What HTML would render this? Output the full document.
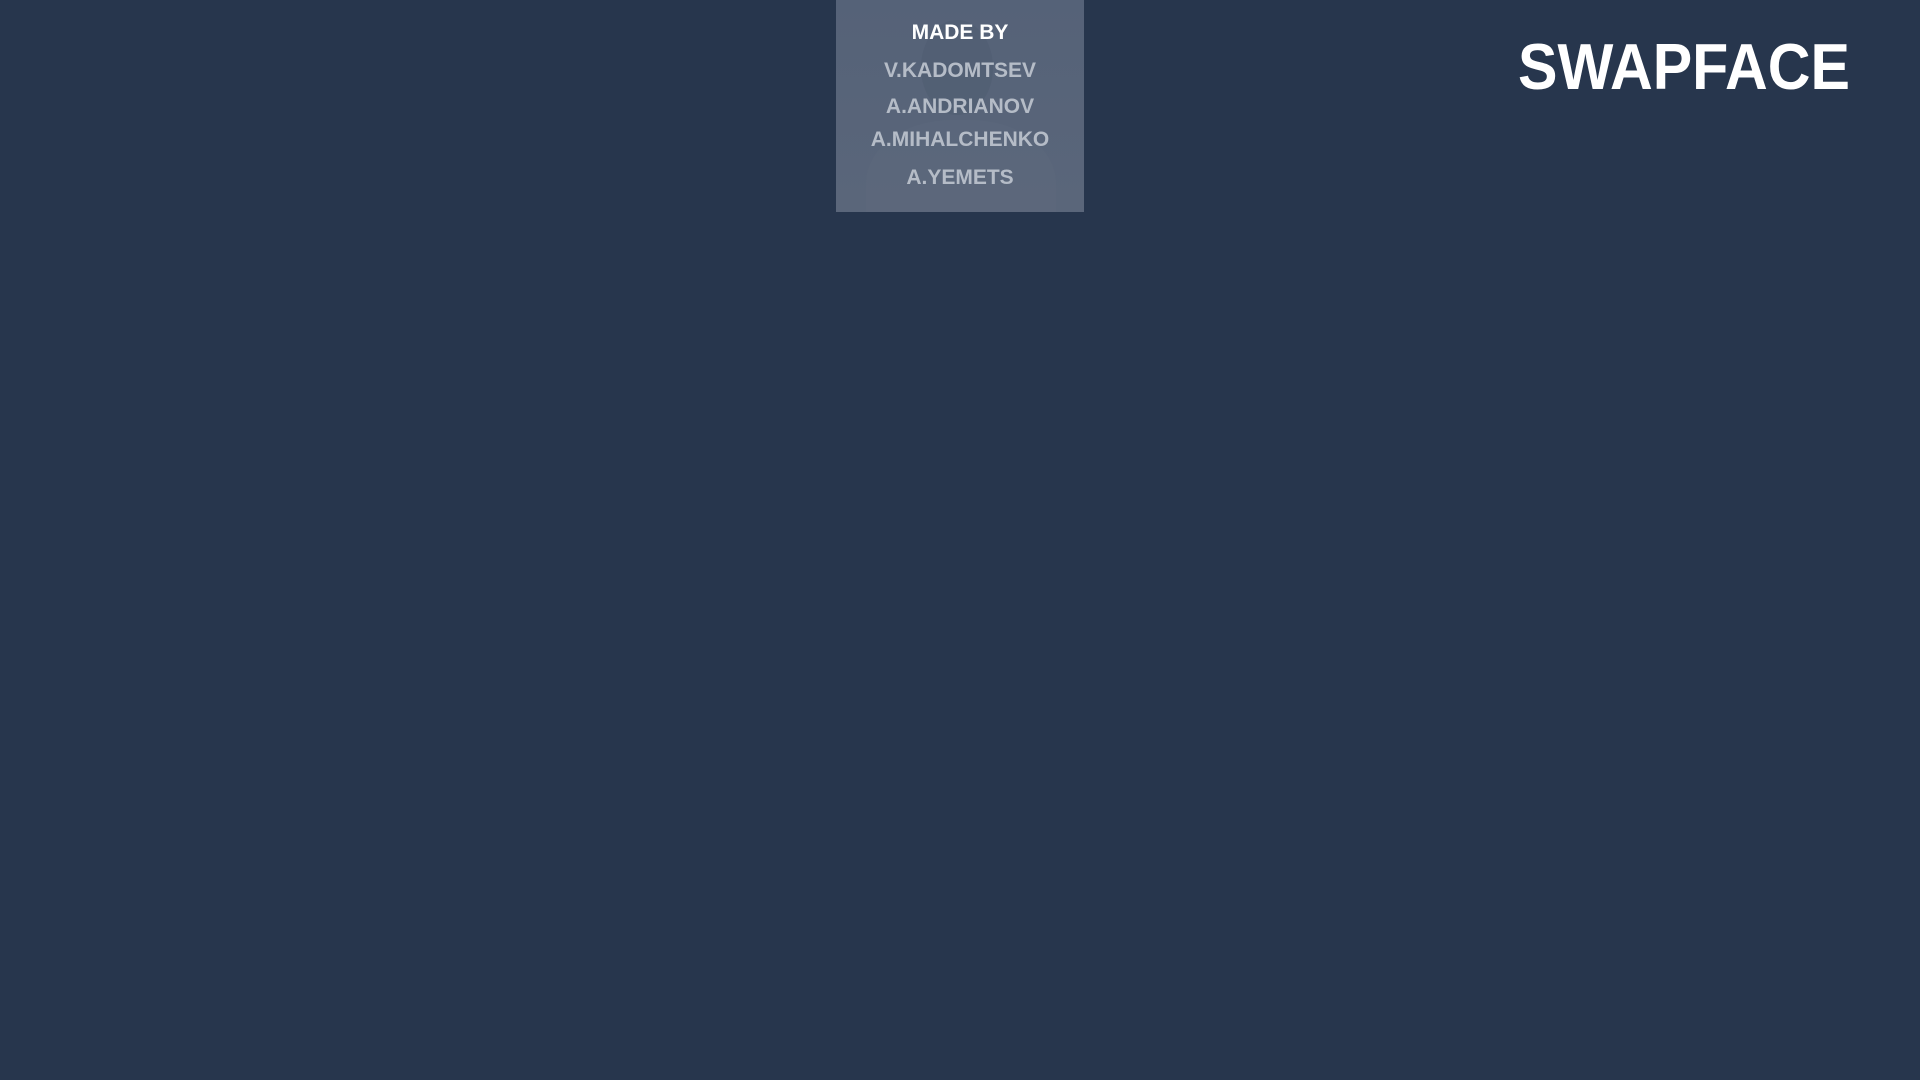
<!DOCTYPE html>
<html><head><meta charset="utf-8"><style>
html,body{margin:0;padding:0;width:1920px;height:1080px;background:#27364d;overflow:hidden;font-family:"Liberation Sans",sans-serif;font-weight:bold}
.box{position:absolute;left:836px;top:0;width:248px;height:212px;background:linear-gradient(#556278,#5a667a);overflow:hidden}
.t{position:absolute;left:836px;width:248px;text-align:center;line-height:1;font-size:21px;color:#b5bcc7;white-space:nowrap}
.h{color:#fff}
.logo{position:absolute;left:1518px;top:34px;font-size:65px;line-height:1;color:#fff;white-space:nowrap;transform-origin:0 0;transform:scaleX(0.91)}
</style></head><body>
<div class="box">
  <div style="position:absolute;left:85px;top:20px;width:72px;height:95px;border-radius:50%;background:#4e5b70;opacity:.5"></div>
  <div style="position:absolute;left:30px;top:120px;width:190px;height:140px;border-radius:45% 45% 0 0;background:#6a7588;opacity:.15"></div>
</div>
<div class="t h" style="top:22px">MADE BY</div>
<div class="t" style="top:60px">V.KADOMTSEV</div>
<div class="t" style="top:96px">A.ANDRIANOV</div>
<div class="t" style="top:129px">A.MIHALCHENKO</div>
<div class="t" style="top:167px">A.YEMETS</div>
<div class="logo">SWAPFACE</div>
</body></html>
